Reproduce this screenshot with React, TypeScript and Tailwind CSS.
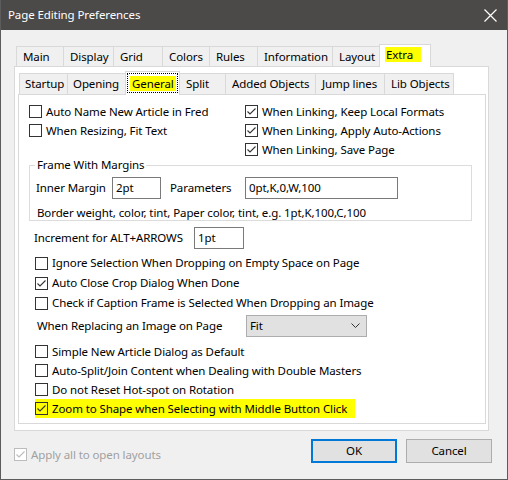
import clsx from "clsx";

const outerTabs: [string, number][] = [
  ["Main", 47],
  ["Display", 50],
  ["Grid", 49],
  ["Colors", 47],
  ["Rules", 48],
  ["Information", 75],
  ["Layout", 47],
];

const innerTabs: [string, number][] = [
  ["Startup", 48],
  ["Opening", 58],
];

const innerTabsAfter: [string, number][] = [
  ["Split", 46],
  ["Added Objects", 90],
  ["Jump lines", 69],
  ["Lib Objects", 69],
];

const Box = ({ checked, disabled, clear }: { checked?: boolean; disabled?: boolean; clear?: boolean }) => (
  <span
    className={clsx(
      "w-[13px] h-[13px] border flex items-center justify-center shrink-0",
      disabled ? "border-[#bcbcbc]" : "border-[#333333]",
      clear ? "bg-transparent" : "bg-white"
    )}
  >
    {checked && (
      <svg width="11" height="11" viewBox="0 0 11 11">
        <path
          d="M1.5 5.5 L4 8 L9.5 2.5"
          fill="none"
          stroke={disabled ? "#bcbcbc" : "#333333"}
          strokeWidth="1.1"
        />
      </svg>
    )}
  </span>
);

const Row = ({ label, checked, h = "h-[19px]" }: { label: string; checked?: boolean; h?: string }) => (
  <div className={clsx("flex items-center gap-[4px] whitespace-nowrap", h)}>
    <Box checked={checked} />
    <span>{label}</span>
  </div>
);

const Field = ({ value, w }: { value: string; w: string }) => (
  <div className={clsx("h-[22px] border border-[#7a7a7a] bg-white flex items-center pl-[3px]", w)}>{value}</div>
);

export default function App() {
  return (
    <div className="w-[508px] h-[480px] bg-[#f0f0f0] border-x border-b border-[#5c5c5c] text-[11.5px] tracking-[-0.1px] text-black font-['Segoe_UI','Noto_Sans',sans-serif] overflow-hidden">
      {/* title bar */}
      <div className="h-[30px] -mx-px bg-[#4c4a48] flex items-center justify-between pl-[8px] pr-[11px]">
        <span className="text-white">Page Editing Preferences</span>
        <svg width="13" height="13" viewBox="0 0 13 13">
          <path d="M0.5 0.5 L12.5 12.5 M12.5 0.5 L0.5 12.5" stroke="#ffffff" strokeWidth="1.2" />
        </svg>
      </div>

      {/* outer tabs */}
      <div className="ml-[13px] mt-[14px]">
        <div className="flex items-end h-[22px] pl-[2px]">
          {outerTabs.map(([t, w], i) => (
            <div
              key={t}
              style={{ width: w + 1 }}
              className={clsx(
                "h-[20px] border border-b-0 border-[#d9d9d9] bg-[#f0f0f0] pl-[6px] flex items-center",
                i > 0 && "-ml-px"
              )}
            >
              {t}
            </div>
          ))}
          <div className="-ml-px w-[52px] h-[23px] -mb-px relative z-10 border border-b-0 border-[#d9d9d9] bg-white pl-[6px] flex items-start pt-[2px]">
            <span className="bg-[#ffff00] px-[1px] pr-[8px] leading-[15px] -ml-[1px]">Extra</span>
          </div>
        </div>

        {/* outer panel */}
        <div className="w-[475px] h-[365px] border border-[#d9d9d9] bg-white pt-[4px]">
          <div className="ml-[2px] flex items-end h-[23px] pl-[2px]">
            {innerTabs.map(([t, w], i) => (
              <div
                key={t}
                style={{ width: w + 1 }}
                className={clsx(
                  "h-[21px] border border-b-0 border-[#d9d9d9] bg-[#f0f0f0] pl-[5px] flex items-center",
                  i > 0 && "-ml-px"
                )}
              >
                {t}
              </div>
            ))}
            <div className="-ml-px w-[55px] h-[24px] -mb-px relative z-10 border border-b-0 border-[#d9d9d9] bg-white pl-[1px] pt-[1px]">
              <div className="border border-dotted border-black w-[51px] h-[20px] flex items-center pl-[2px]">
                <span className="bg-[#ffff00] px-[2px] leading-[15px]">General</span>
              </div>
            </div>
            {innerTabsAfter.map(([t, w]) => (
              <div
                key={t}
                style={{ width: w + 1 }}
                className="-ml-px h-[21px] border border-b-0 border-[#d9d9d9] bg-[#f0f0f0] pl-[6px] flex items-center whitespace-nowrap"
              >
                {t}
              </div>
            ))}
          </div>

          {/* inner panel */}
          <div className="ml-[3px] w-[468px] h-[330px] border border-[#d9d9d9] bg-white pt-[7px]">
            <div className="flex pl-[10px]">
              <div className="w-[216px]">
                <Row label="Auto Name New Article in Fred" />
                <Row label="When Resizing, Fit Text" />
              </div>
              <div>
                <Row label="When Linking, Keep Local Formats" checked />
                <Row label="When Linking, Apply Auto-Actions" checked />
                <Row label="When Linking, Save Page" checked />
              </div>
            </div>

            <fieldset className="ml-[10px] w-[443px] border border-[#dcdcdc]">
              <legend className="ml-[5px] px-[2px] leading-[12px]">Frame With Margins</legend>
              <div className="mt-[6px] flex items-center h-[22px] pl-[6px]">
                <span className="w-[76px]">Inner Margin</span>
                <Field value="2pt" w="w-[49px]" />
                <span className="ml-[9px] w-[75px]">Parameters</span>
                <Field value="0pt,K,0,W,100" w="w-[153px]" />
              </div>
              <div className="mt-[7px] pl-[7px] leading-[14px] whitespace-nowrap">
                Border weight, color, tint, Paper color, tint, e.g. 1pt,K,100,C,100
              </div>
            </fieldset>

            <div className="mt-[6px] flex items-center h-[22px] pl-[15px]">
              <span className="w-[160px]">Increment for ALT+ARROWS</span>
              <Field value="1pt" w="w-[50px]" />
            </div>

            <div className="mt-[4px] pl-[16px]">
              <Row h="h-[20px]" label="Ignore Selection When Dropping on Empty Space on Page" />
              <Row h="h-[20px]" label="Auto Close Crop Dialog When Done" checked />
              <Row h="h-[20px]" label="Check if Caption Frame is Selected When Dropping an Image" />
            </div>

            <div className="mt-[2px] flex items-center h-[22px] pl-[18px]">
              <span className="w-[209px]">When Replacing an Image on Page</span>
              <div className="w-[121px] h-[22px] border border-[#adadad] bg-[#e1e1e1] flex items-center justify-between pl-[3px] pr-[6px]">
                <span>Fit</span>
                <svg width="9" height="6" viewBox="0 0 9 6">
                  <path d="M0.5 0.5 L4.5 4.5 L8.5 0.5" fill="none" stroke="#333333" strokeWidth="1" />
                </svg>
              </div>
            </div>

            <div className="mt-[5px] pl-[16px]">
              <Row label="Simple New Article Dialog as Default" />
              <Row label="Auto-Split/Join Content when Dealing with Double Masters" />
              <Row label="Do not Reset Hot-spot on Rotation" />
              <div className="flex items-center gap-[4px] h-[19px] w-[320px] bg-[#ffff00] whitespace-nowrap">
                <Box checked clear />
                <span>Zoom to Shape when Selecting with Middle Button Click</span>
              </div>
            </div>
          </div>
        </div>
      </div>

      {/* footer */}
      <div className="mt-[8px] flex items-start h-[24px]">
        <div className="ml-[13px] mt-[7px] flex items-center gap-[4px] text-[#a0a0a0]">
          <Box checked disabled />
          <span>Apply all to open layouts</span>
        </div>
        <div className="ml-auto mr-[15px] flex gap-[9px]">
          <button className="w-[86px] h-[24px] border-2 border-[#0078d7] bg-[#e1e1e1]">OK</button>
          <button className="w-[86px] h-[24px] border border-[#adadad] bg-[#e1e1e1]">Cancel</button>
        </div>
      </div>
    </div>
  );
}
